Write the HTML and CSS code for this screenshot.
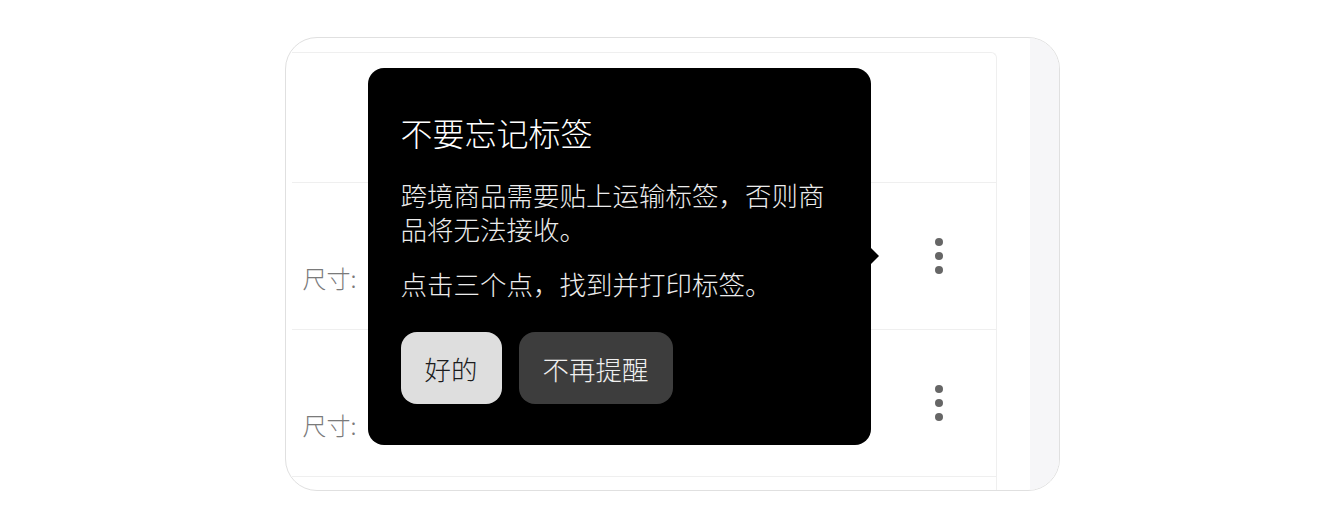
FILE: index.html
```html
<!DOCTYPE html>
<html lang="zh-CN">
<head>
  <meta charset="UTF-8">
  <title>订单列表</title>
  <link rel="stylesheet" href="styles.css">
</head>
<body>
  <div class="frame">
    <div class="list-area">
      <div class="list-card">
        <div class="row row-first"></div>
        <div class="row row-mid">
          <div class="info"><span class="size">尺寸:</span></div>
          <div class="kebab"><span></span><span></span><span></span></div>
        </div>
        <div class="row row-mid">
          <div class="info"><span class="size">尺寸:</span></div>
          <div class="kebab"><span></span><span></span><span></span></div>
        </div>
        <div class="row row-last"></div>
      </div>
    </div>
    <div class="side-strip"></div>

    <div class="tip">
      <h2 class="tip-title">不要忘记标签</h2>
      <p class="tip-text">跨境商品需要贴上运输标签，否则商品将无法接收。</p>
      <p class="tip-text tip-second">点击三个点，找到并打印标签。</p>
      <div class="tip-actions">
        <button class="btn btn-ok">好的</button>
        <button class="btn btn-dismiss">不再提醒</button>
      </div>
    </div>
  </div>
</body>
</html>
```

FILE: styles.css
```css
body {
  margin: 0;
  background: #fff;
  font-family: "Noto Sans CJK SC", "Noto Sans", sans-serif;
}
.frame {
  position: relative;
  width: 775px;
  height: 454px;
  margin: 37px auto 0;
  box-sizing: border-box;
  border: 1.5px solid #e0e0e0;
  border-radius: 32px;
  overflow: hidden;
  display: grid;
  grid-template-columns: 1fr 29px;
}
.list-area {
  padding: 14px 33px 0 6px;
}
.list-card {
  border-top: 1px solid #efefef;
  border-right: 1px solid #efefef;
  border-top-right-radius: 6px;
  height: 100%;
}
.side-strip {
  background: #f6f6f8;
}
.row {
  display: flex;
  justify-content: space-between;
  align-items: center;
  padding: 0 53px 0 11px;
  border-bottom: 1px solid #efefef;
}
.row-first {
  height: 129px;
}
.row-mid {
  height: 146px;
}
.row-mid:last-of-type {
  height: 148px;
}
.row-last {
  height: 40px;
  border-bottom: none;
}
.info {
  padding-top: 44px;
}
.size {
  display: block;
  font-size: 24px;
  line-height: 32px;
  font-weight: 300;
  color: #7a7a7a;
}
.kebab {
  display: flex;
  flex-direction: column;
  gap: 6px;
}
.kebab span {
  width: 8px;
  height: 8px;
  border-radius: 50%;
  background: #666;
}
.tip {
  position: absolute;
  left: 82px;
  top: 30px;
  width: 503px;
  box-sizing: border-box;
  padding: 44px 33px 41px;
  background: #000;
  border-radius: 16px;
  color: #fff;
}
.tip::after {
  content: "";
  position: absolute;
  right: -8px;
  top: 179px;
  border-left: 9px solid #000;
  border-top: 9px solid transparent;
  border-bottom: 9px solid transparent;
}
.tip-title {
  margin: 0 0 26px;
  font-size: 32px;
  line-height: 40px;
  font-weight: 300;
}
.tip-text {
  margin: 0;
  font-size: 26.5px;
  line-height: 34px;
  font-weight: 300;
  color: #ececec;
}
.tip-second {
  margin-top: 21px;
}
.tip-actions {
  display: flex;
  gap: 17px;
  margin-top: 31px;
}
.btn {
  height: 72px;
  padding: 0 24px;
  border: none;
  border-radius: 16px;
  font-family: inherit;
  font-size: 26.5px;
  font-weight: 300;
  cursor: pointer;
}
.btn-ok {
  background: #dedede;
  color: #1c1c1c;
}
.btn-dismiss {
  background: #3d3d3d;
  color: #f0f0f0;
}
```
